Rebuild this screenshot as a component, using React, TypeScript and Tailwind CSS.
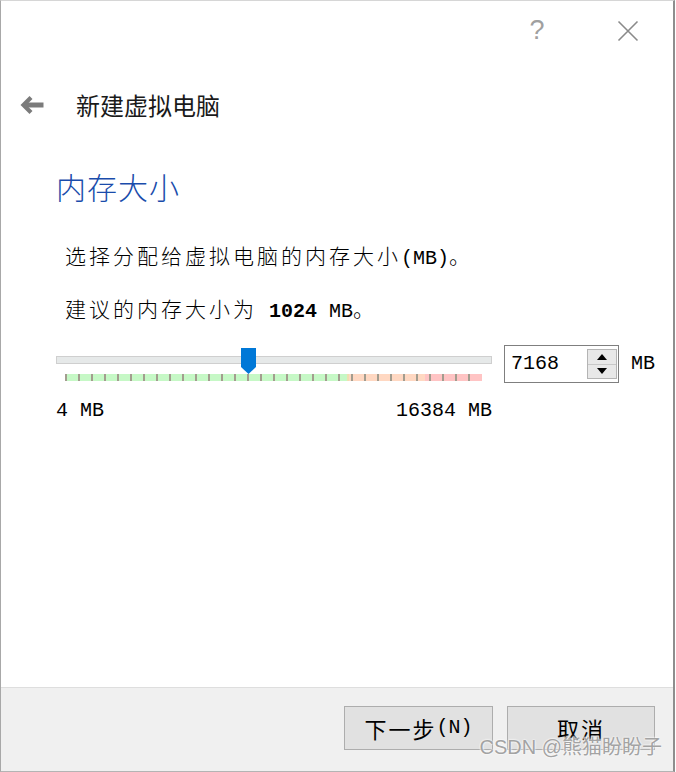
import type { ReactNode } from 'react';

const cjk = "font-['Noto_Sans_CJK_SC',sans-serif]";

const Latin = ({ children, bold }: { children: ReactNode; bold?: boolean }) => (
  <span
    className={`font-['Liberation_Mono',monospace] text-[20px] tracking-normal whitespace-pre ${bold ? 'font-bold' : ''}`}
  >
    {children}
  </span>
);

const BackArrow = () => (
  <svg width="24" height="20" viewBox="0 0 24 20" fill="none">
    <path d="M11 2.5 L3.5 10 L11 17.5" stroke="#7b7b7b" strokeWidth="4.2" strokeLinejoin="miter" />
    <path d="M4 10 H23.5" stroke="#7b7b7b" strokeWidth="5" />
  </svg>
);

const CloseIcon = () => (
  <svg width="22" height="22" viewBox="0 0 22 22">
    <path d="M1.5 1.5 L20.5 20.5 M20.5 1.5 L1.5 20.5" stroke="#8a8a8a" strokeWidth="1.6" />
  </svg>
);

const Thumb = () => (
  <svg width="15" height="26" viewBox="0 0 15 26">
    <path d="M0 0 H15 V19 L7.5 26 L0 19 Z" fill="#0078d7" />
  </svg>
);

const ticks = Array.from({ length: 32 });

const Slider = () => (
  <div className="relative w-[436px] h-[38px] flex flex-col">
    <div className="mt-[11px] h-[8px] bg-[#e6e9e9] border border-[#cfcfcf]" />
    <div className="relative mt-[10px] ml-[9px] w-[417px] h-[7px] flex">
      <div className="w-[282px] bg-[#c6f8c6]" />
      <div className="w-[2px] bg-[#eee0b0]" />
      <div className="w-[76px] bg-[#ffd8c2]" />
      <div className="w-[57px] bg-[#ffc4c4]" />
      <div className="absolute inset-y-0 left-0 w-[405px] flex justify-between">
        {ticks.map((_, i) => (
          <div key={i} className="w-[2px] bg-[#a39d8f]" />
        ))}
      </div>
    </div>
    <div className="absolute left-[185px] top-[3px]">
      <Thumb />
    </div>
  </div>
);

const SpinBox = () => (
  <div className="ml-[12px] w-[115px] h-[38px] border border-[#7f7f7f] bg-white flex items-center justify-between pl-[6px] pr-[1px]">
    <span className="font-['Liberation_Mono',monospace] text-[20px] text-black">7168</span>
    <div className="w-[30px] h-[30px] border border-[#b4b4b4] bg-[#e8e8e8] flex flex-col">
      <div className="flex-1 flex items-center justify-center border-b border-[#c8c8c8]">
        <svg width="10" height="6" viewBox="0 0 10 6">
          <path d="M0 6 L5 0 L10 6 Z" fill="#000" />
        </svg>
      </div>
      <div className="flex-1 flex items-center justify-center">
        <svg width="10" height="6" viewBox="0 0 10 6">
          <path d="M0 0 L10 0 L5 6 Z" fill="#000" />
        </svg>
      </div>
    </div>
  </div>
);

const FooterButton = ({ children, width }: { children: ReactNode; width: string }) => (
  <button
    className={`${width} h-[44px] bg-[#e1e1e1] border border-[#adadad] flex items-center justify-center ${cjk} text-[22px] tracking-[2px] text-black`}
  >
    {children}
  </button>
);

export default function App() {
  return (
    <div className="relative w-[676px] h-[772px] bg-white overflow-hidden">
      <div className="w-[675px] h-[772px] flex flex-col border-l border-r-2 border-b border-l-[#a8a8a8] border-r-[#8e8e8e] border-b-[#b4b4b4] border-t border-t-[#d6d6d6]">
        <div className="flex-1 flex flex-col">
          {/* title bar */}
          <div className="h-[59px] flex items-center justify-end pr-[15px]">
            <div className="w-[46px] flex justify-center font-['Liberation_Sans',sans-serif] text-[27px] leading-none text-[#a0a0a0] font-light">
              ?
            </div>
            <div className="ml-[38px] w-[60px] flex justify-center">
              <CloseIcon />
            </div>
          </div>

          {/* wizard header */}
          <div className="mt-[21px] h-[48px] flex items-center pl-[19px]">
            <BackArrow />
            <span className={`ml-[32px] ${cjk} text-[24px] text-[#1a1a1a]`}>新建虚拟电脑</span>
          </div>

          {/* page content */}
          <div className="pl-[55px] flex flex-col">
            <h1 className={`mt-[37px] h-[40px] leading-[40px] ${cjk} text-[30px] font-light tracking-[1px] text-[#1a4cab]`}>
              内存大小
            </h1>

            <p className={`mt-[33px] pl-[9px] leading-[32px] ${cjk} text-[21px] font-light tracking-[3px] text-black`}>
              选择分配给虚拟电脑的内存大小<Latin>(MB)</Latin>。
            </p>

            <p className={`mt-[17px] pl-[9px] leading-[32px] ${cjk} text-[21px] font-light tracking-[3px] text-black`}>
              建议的内存大小为<Latin> </Latin>
              <Latin bold>1024</Latin>
              <Latin> MB</Latin>。
            </p>

            <div className="mt-[17px] flex items-start">
              <Slider />
              <SpinBox />
              <div className="ml-[12px] h-[38px] flex items-center">
                <Latin>MB</Latin>
              </div>
            </div>

            <div className="mt-[14px] w-[436px] flex justify-between leading-[28px] text-black">
              <Latin>4 MB</Latin>
              <Latin>16384 MB</Latin>
            </div>
          </div>
        </div>

        {/* footer */}
        <div className="h-[84px] bg-[#f0f0f0] border-t border-[#dedede] flex justify-end items-start pt-[18px] pr-[18px] gap-[14px]">
          <FooterButton width="w-[149px]">
            下一步<Latin>(N)</Latin>
          </FooterButton>
          <FooterButton width="w-[148px]">取消</FooterButton>
        </div>
      </div>

      {/* watermark */}
      <div
        className={`absolute right-[14px] bottom-[10px] ${cjk} text-[20px] text-[#a3a3a3] [text-shadow:0_0_2px_#fff,0_0_2px_#fff]`}
      >
        <span className="font-['Liberation_Sans',sans-serif]">CSDN @</span>熊猫盼盼子
      </div>
    </div>
  );
}
